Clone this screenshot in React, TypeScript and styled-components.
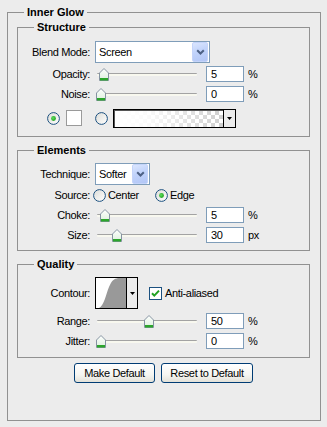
import React, { useId } from "react";
import styled, { createGlobalStyle } from "styled-components";

const GlobalStyle = createGlobalStyle`
  html, body { margin: 0; padding: 0; background: #ececec; }
  body {
    font-family: "Liberation Sans", Arial, sans-serif;
    font-size: 11px;
    color: #000;
    letter-spacing: -0.35px;
  }
`;

const Group = styled.fieldset<{ $mt?: number }>`
  margin: ${(p) => p.$mt ?? 0}px 0 0 0;
  padding: 0;
  border: 1px solid #919191;
  min-width: 0;
`;

const Outer = styled(Group)`
  margin: 6px 6px 0 7px;
`;

const Title = styled.legend`
  margin-left: 16px;
  padding: 0 3px;
  height: 13px;
  line-height: 13px;
  font-weight: bold;
  letter-spacing: 0;
`;

const Body = styled.div<{ $pad: string }>`
  padding: ${(p) => p.$pad};
  display: flex;
  flex-direction: column;
`;

const Row = styled.div<{ $h: number; $mt?: number; $indent?: number }>`
  display: flex;
  align-items: center;
  height: ${(p) => p.$h}px;
  margin-top: ${(p) => p.$mt ?? 0}px;
  padding-left: ${(p) => p.$indent ?? 0}px;
  flex-shrink: 0;
`;

const Label = styled.span<{ $gap?: number }>`
  width: 72px;
  margin-right: ${(p) => p.$gap ?? 5}px;
  text-align: right;
  white-space: nowrap;
  flex-shrink: 0;
`;

/* Select */
const SelectBox = styled.div<{ $w: number }>`
  width: ${(p) => p.$w}px;
  height: 22px;
  box-sizing: border-box;
  border: 1px solid #7f9db9;
  background: #fff;
  display: flex;
  align-items: center;
  flex-shrink: 0;
`;
const SelectText = styled.span`
  flex: 1;
  padding-left: 3px;
`;
const DropBtn = styled.div`
  width: 16px;
  height: 20px;
  margin-right: 1px;
  box-sizing: border-box;
  border: 1px solid #c4d4fa;
  border-radius: 2px;
  background: linear-gradient(160deg, #dbe6fe 0%, #c1d3fb 45%, #b2c6f6 100%);
  display: flex;
  align-items: center;
  justify-content: center;
`;

const Select = ({ w, value }: { w: number; value: string }) => (
  <SelectBox $w={w}>
    <SelectText>{value}</SelectText>
    <DropBtn>
      <svg width="9" height="6" viewBox="0 0 9 6">
        <path d="M1.2 1.2 L4.5 4.5 L7.8 1.2" fill="none" stroke="#4d6185" strokeWidth="2" />
      </svg>
    </DropBtn>
  </SelectBox>
);

/* Slider */
const SliderBox = styled.div`
  position: relative;
  width: 103px;
  height: 20px;
  flex-shrink: 0;
`;
const Track = styled.div`
  margin: 9px 1px 0 2px;
  height: 2px;
  border-top: 1px solid #a3a3a3;
  background: #f8f8ef;
  border-radius: 1px;
`;
const ThumbSvg = styled.svg`
  position: absolute;
  top: 4px;
`;

const Slider = ({ pos }: { pos: number }) => {
  const id = useId();
  return (
    <SliderBox>
      <Track />
      <ThumbSvg width="10" height="13" viewBox="0 0 10 13" style={{ left: 1 + pos * 0.96 }}>
        <defs>
          <linearGradient id={id} x1="0" y1="0" x2="0" y2="1">
            <stop offset="0" stopColor="#ffffff" />
            <stop offset="1" stopColor="#dcefdc" />
          </linearGradient>
        </defs>
        <path d="M0.5 5 L5 0.5 L9.5 5 V12.5 H0.5 Z" fill={`url(#${id})`} stroke="#8593a1" />
        <rect x="1" y="10" width="8" height="2.5" fill="#2ca52c" />
      </ThumbSvg>
    </SliderBox>
  );
};

const NumInput = styled.input`
  width: 38px;
  height: 16px;
  box-sizing: border-box;
  margin: 0 0 0 8px;
  padding: 0 0 0 4px;
  border: 1px solid #7f9db9;
  background: #fff;
  font: inherit;
  letter-spacing: inherit;
  color: #000;
  outline: none;
  flex-shrink: 0;
`;
const Unit = styled.span`
  margin-left: 4px;
`;

const SliderRow = ({ label, pos, value, unit, mt }: { label: string; pos: number; value: string; unit: string; mt?: number }) => (
  <Row $h={20} $mt={mt}>
    <Label>{label}</Label>
    <Slider pos={pos} />
    <NumInput readOnly value={value} />
    <Unit>{unit}</Unit>
  </Row>
);

/* Radio & checkbox */
const Radio = ({ checked, ml = 0 }: { checked?: boolean; ml?: number }) => {
  const id = useId();
  const gid = useId();
  return (
    <RadioSvg width="13" height="13" viewBox="0 0 13 13" $ml={ml}>
      <defs>
        <linearGradient id={id} x1="0" y1="0" x2="1" y2="1">
          <stop offset="0" stopColor="#dcdcd7" />
          <stop offset="1" stopColor="#ffffff" />
        </linearGradient>
        <radialGradient id={gid} cx="0.4" cy="0.4" r="0.7">
          <stop offset="0" stopColor="#60e060" />
          <stop offset="1" stopColor="#169a16" />
        </radialGradient>
      </defs>
      <circle cx="6.5" cy="6.5" r="5.9" fill={`url(#${id})`} stroke="#1c5180" strokeWidth="1" />
      {checked && <circle cx="6.5" cy="6.5" r="2.4" fill={`url(#${gid})`} />}
    </RadioSvg>
  );
};
const RadioSvg = styled.svg<{ $ml: number }>`
  flex-shrink: 0;
  margin-left: ${(p) => p.$ml}px;
`;
const OptText = styled.span`
  margin-left: 2px;
`;

const CheckSvg = styled.svg`
  flex-shrink: 0;
  margin-left: 11px;
`;
const Checkbox = () => (
  <CheckSvg width="13" height="13" viewBox="0 0 13 13">
    <rect x="0.5" y="0.5" width="12" height="12" fill="#fff" stroke="#1c5180" />
    <path d="M3 6.2 L5.3 8.6 L10 3.6" fill="none" stroke="#21a121" strokeWidth="2" />
  </CheckSvg>
);

/* Colour row */
const Swatch = styled.div`
  width: 16px;
  height: 16px;
  box-sizing: border-box;
  margin-left: 6px;
  border: 1px solid #9a9a9a;
  background: #fff;
  flex-shrink: 0;
`;
const GradBox = styled.div`
  width: 123px;
  height: 19px;
  box-sizing: border-box;
  margin-left: 5px;
  border: 1px solid #000;
  box-shadow: inset 1px 1px 0 #555;
  display: flex;
  flex-shrink: 0;
`;
const GradFill = styled.div`
  flex: 1;
  margin: 1px 0 0 1px;
  background:
    linear-gradient(to right, #ffffff 0%, rgba(255, 255, 255, 0.9) 30%, rgba(255, 255, 255, 0) 100%),
    conic-gradient(#cfcfcf 25%, #ffffff 0 50%, #cfcfcf 0 75%, #ffffff 0) 0 0 / 8px 8px;
`;
const SmallArrow = styled.div<{ $w: number }>`
  width: ${(p) => p.$w}px;
  box-sizing: border-box;
  border-left: 1px solid #000;
  background: #ececec;
  display: flex;
  align-items: center;
  justify-content: center;
  flex-shrink: 0;
`;
const Tri = () => (
  <svg width="5" height="3" viewBox="0 0 5 3">
    <path d="M0 0 H5 L2.5 3 Z" fill="#000" />
  </svg>
);

/* Contour */
const ContourBox = styled.div`
  width: 43px;
  height: 32px;
  box-sizing: border-box;
  border: 1px solid #000;
  background: #fff;
  display: flex;
  flex-shrink: 0;
`;
const ContourPic = styled.svg`
  flex: 1;
  display: block;
`;
const CheckText = styled.span`
  margin-left: 3px;
`;

/* Buttons */
const ButtonRow = styled.div`
  display: flex;
  justify-content: center;
  gap: 6px;
  margin-top: 5px;
`;
const Button = styled.button<{ $w: number }>`
  width: ${(p) => p.$w}px;
  height: 20px;
  box-sizing: border-box;
  padding: 0;
  border: 1px solid #003c74;
  border-radius: 3px;
  background: linear-gradient(#ffffff 0%, #f5f5f1 60%, #e3e1d8 100%);
  font: inherit;
  letter-spacing: inherit;
  color: #000;
`;

export default function App() {
  return (
    <>
      <GlobalStyle />
      <Outer>
        <Title>Inner Glow</Title>
        <Body $pad="2px 10px 37px 9px">
          <Group>
            <Title>Structure</Title>
            <Body $pad="7px 0 8px 0">
              <Row $h={22}>
                <Label>Blend Mode:</Label>
                <Select w={115} value="Screen" />
              </Row>
              <SliderRow label="Opacity:" pos={3} value="5" unit="%" mt={1} />
              <SliderRow label="Noise:" pos={0} value="0" unit="%" />
              <Row $h={20} $mt={4} $indent={29}>
                <Radio checked />
                <Swatch />
                <Radio ml={13} />
                <GradBox>
                  <GradFill />
                  <SmallArrow $w={12}>
                    <Tri />
                  </SmallArrow>
                </GradBox>
              </Row>
            </Body>
          </Group>

          <Group $mt={7}>
            <Title>Elements</Title>
            <Body $pad="6px 0 5px 0">
              <Row $h={22}>
                <Label>Technique:</Label>
                <Select w={55} value="Softer" />
              </Row>
              <Row $h={20}>
                <Label $gap={3}>Source:</Label>
                <Radio />
                <OptText>Center</OptText>
                <Radio checked ml={16} />
                <OptText>Edge</OptText>
              </Row>
              <SliderRow label="Choke:" pos={4} value="5" unit="%" />
              <SliderRow label="Size:" pos={16.5} value="30" unit="px" />
            </Body>
          </Group>

          <Group $mt={7}>
            <Title>Quality</Title>
            <Body $pad="6px 0 6px 0">
              <Row $h={32}>
                <Label>Contour:</Label>
                <ContourBox>
                  <ContourPic viewBox="0 0 30 30" preserveAspectRatio="none">
                    <path d="M3 30 C 8 28, 10 16, 13 9 S 18 1, 22 0 L30 0 L30 30 Z" fill="#999999" />
                  </ContourPic>
                  <SmallArrow $w={11}>
                    <Tri />
                  </SmallArrow>
                </ContourBox>
                <Checkbox />
                <CheckText>Anti-aliased</CheckText>
              </Row>
              <SliderRow label="Range:" pos={50} value="50" unit="%" mt={2} />
              <SliderRow label="Jitter:" pos={0} value="0" unit="%" />
            </Body>
          </Group>

          <ButtonRow>
            <Button $w={81}>Make Default</Button>
            <Button $w={92}>Reset to Default</Button>
          </ButtonRow>
        </Body>
      </Outer>
    </>
  );
}
